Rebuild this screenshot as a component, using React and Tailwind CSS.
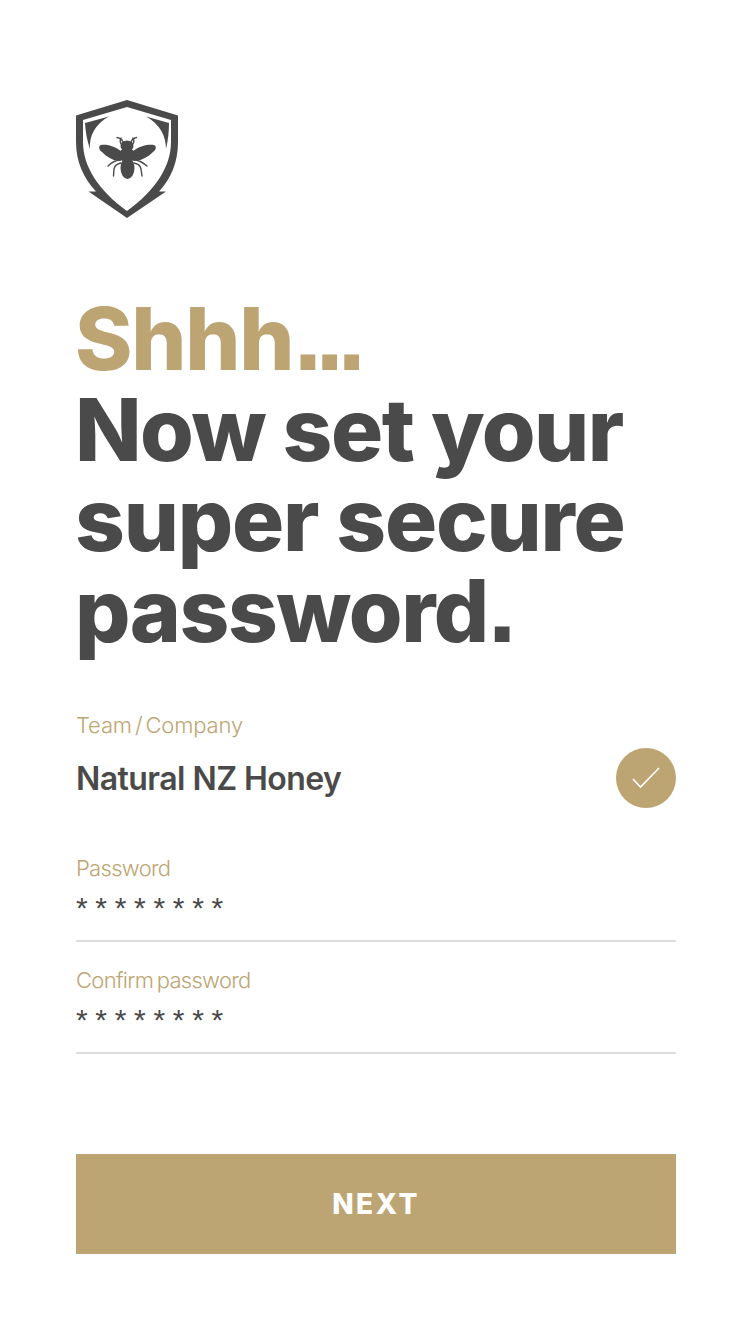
function ShieldLogo() {
  return (
    <svg width="102" height="118" viewBox="0 0 102 118" className="block">
      <path
        fillRule="evenodd"
        fill="#4a4a4a"
        d="M51 0 L102 15.5 L102 42 C102 62 95 79 83 91.5 L90 91.5 L51 118 L12.5 91.5 L20 91.5 C8 79 0 62 0 42 L0 15.5 Z M51 7 L7 20 L7 42 C7 66 22 90 51 111 C80 90 95 66 95 42 L95 20 Z"
      />
      <path fill="#4a4a4a" d="M9 23 L33 16.5 C19 24 13 36 14 49 C11 40 9.5 32 9 23 Z" />
      <path fill="#4a4a4a" d="M93 23 L70 16.5 C84 24 90 36 90 49 C92 40 93 32 93 23 Z" />
      <g fill="#4a4a4a">
        <ellipse cx="51" cy="46" rx="6.5" ry="5.5" />
        <ellipse cx="51" cy="55" rx="8" ry="7" />
        <ellipse cx="51.5" cy="68" rx="7" ry="11" />
        <path d="M45 51 C37 45 29 44 25 45 C22 46 23 50 26 52 C32 58 39 62 45 60 Z" />
        <path d="M57 51 C65 45 73 44 78 45 C81 46 80 50 77 52 C71 58 63 62 57 60 Z" />
      </g>
      <g fill="none" stroke="#4a4a4a" strokeWidth="1.4" strokeLinecap="round" strokeLinejoin="round">
        <path d="M47 42 C46 39 44 38 41 37.5" />
        <path d="M55 42 C56 39 58 38 60.5 37.5" />
        <path d="M46 45 C44 43 44 40 45 38" />
        <path d="M56 45 C58 43 58 40 57 38" />
        <path d="M45 60 C39 60 36 62 32 66" />
        <path d="M57 60 C63 60 66 62 71 66" />
        <path d="M45 63 C41 64 39 65 38 69 L37.5 76" />
        <path d="M58 63 C62 64 64 65 65 69 L66 76" />
      </g>
    </svg>
  );
}

function Field({ label }) {
  return (
    <div className="border-b-2 border-[#dcdcdc] h-[87px]">
      <div className="text-[22px] leading-[26px] text-[#bda573] font-light tracking-[-0.7px] [word-spacing:-2px]">{label}</div>
      <div className="mt-[9px] text-[30px] leading-[36px] text-[#4a4a4a] font-['Liberation_Sans',sans-serif] tracking-[7.7px]">********</div>
    </div>
  );
}

export default function App() {
  return (
    <div className="w-[750px] h-[1334px] bg-white pl-[76px] pr-[74px] pt-[100px] overflow-hidden font-['Inter',sans-serif]">
      <ShieldLogo />

      <h1 className="mt-[76px] -ml-px text-[87px] leading-[90.5px] font-extrabold tracking-[-1.5px]">
        <div className="text-[#bda573] tracking-[-1.2px]">
          Shhh<span className="font-['Liberation_Sans',sans-serif] font-bold text-[104px] leading-[0] tracking-[-7px]">...</span>
        </div>
        <div className="text-[#4a4a4a]">Now set your</div>
        <div className="text-[#4a4a4a] tracking-[-1.2px]">super secure</div>
        <div className="text-[#4a4a4a]">
          password<span className="font-['Liberation_Sans',sans-serif] font-bold text-[104px] leading-[0]">.</span>
        </div>
      </h1>

      <div className="mt-[56px] text-[22px] leading-[26px] text-[#bda573] font-light tracking-[-0.15px] [word-spacing:-3px]">Team / Company</div>

      <div className="flex items-center justify-between mt-[10px]">
        <span className="pt-[2px] text-[32px] leading-[40px] font-semibold text-[#4a4a4a] tracking-[-0.55px]">Natural NZ Honey</span>
        <span className="w-[60px] h-[60px] rounded-full bg-[#bda573] flex items-center justify-center">
          <svg width="30" height="24" viewBox="0 0 30 24" fill="none" stroke="#ffffff" strokeWidth="1.6">
            <path d="M2 13 L9.5 21 L28 2" />
          </svg>
        </span>
      </div>

      <div className="mt-[47px] flex flex-col gap-[25px]">
        <Field label="Password" />
        <Field label="Confirm password" />
      </div>

      <button className="mt-[100px] w-full h-[100px] bg-[#bda573] text-white text-[28px] font-extrabold tracking-[2.5px]">NEXT</button>
    </div>
  );
}
